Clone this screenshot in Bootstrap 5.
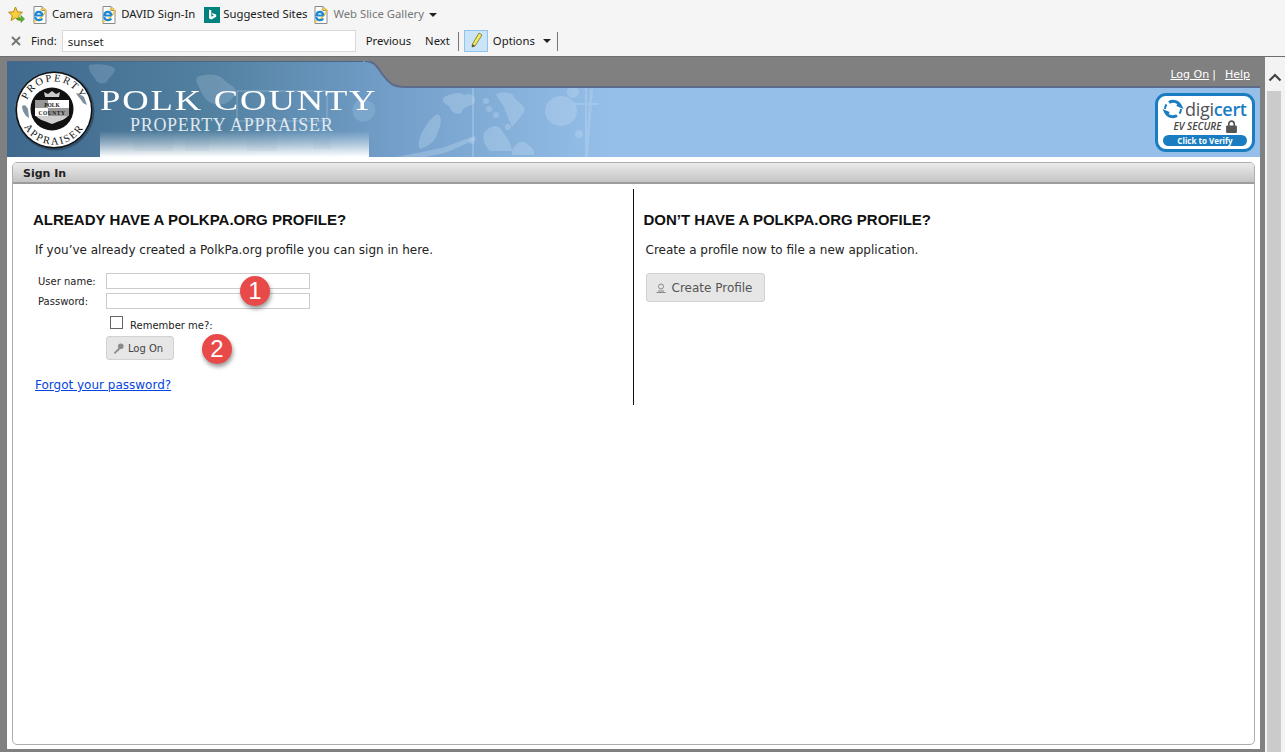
<!DOCTYPE html>
<html lang="en">
<head>
  <meta charset="UTF-8">
  <title>Sign In - Polk County Property Appraiser</title>
  <link rel="stylesheet" href="https://cdn.jsdelivr.net/npm/bootstrap@5.3.0/dist/css/bootstrap.min.css">
  <style>
    html, body { height: 100%; overflow: hidden; }
    body { background: #fff; font-family: "DejaVu Sans", sans-serif; color: #222; }
    .shell { height: 752px; width: 1285px; }

    /* browser toolbars */
    .chrome { height: 57px; background: #f5f5f5; border-bottom: 1px solid #6e6e6e; font-family: "Noto Sans", sans-serif; font-size: 11.3px; color: #1a1a1a; padding-left: 8px; }
    .fav-row { height: 27px; padding-top: 2px; }
    .find-row { height: 28px; }
    .fav-item { margin-right: 9px; gap: 3px; }
    .fav-tight { margin-right: 7px; }
    .fav-off { color: #777; }
    .caret-dn { width: 0; height: 0; border-left: 4px solid transparent; border-right: 4px solid transparent; border-top: 4px solid #222; }
    .caret-near { margin-left: 2px; }
    .find-close { width: 19px; padding-left: 3px; }
    .find-input { width: 294px; height: 22px; margin: 0 10px 0 5px; padding: 0 5px; font-size: 11.5px; font-family: inherit; border: 1px solid #d9d9d9; border-radius: 0; background: #fff; color: #222; }
    .find-next { margin-left: 14px; }
    .find-sep { width: 1px; height: 19px; background: #777; }
    .mark-btn { width: 24px; height: 22px; background: #cce4f7; border: 1px solid #8fc4ee; margin: 0 5px; }
    .opt-caret { margin: 0 6px 0 8px; }

    /* page */
    .viewport { height: 695px; background: #808080; }
    .page { width: 1253px; margin: 4px 0 3px 7px; background: #fff; }
    .scroll-bar { width: 20px; margin-left: 5px; background: #f3f3f3; }
    .scroll-top { height: 34px; padding-top: 16px; }
    .scroll-track { width: 14px; margin-left: 2px; background: #cbcbcb; }
    .edge { width: 0; flex: 1; background: #fff; }

    /* banner */
    .banner { height: 96px; }
    .banner-art { left: 0; top: 0; }
    .banner-in { z-index: 1; }
    .seal { margin: 8px 0 0 6px; flex: none; }
    .title-box { font-family: "Liberation Serif", serif; margin-left: 5px; padding-top: 24px; color: #fff; white-space: nowrap; line-height: 1; }
    .title-main { font-size: 30px; letter-spacing: 1.5px; transform: scaleX(1.22); transform-origin: left center; }
    .title-sub { font-size: 18px; letter-spacing: .7px; margin-left: 30px; margin-top: 1px; color: #dfe8f0; }
    .top-links { right: 10px; top: 6px; z-index: 1; font-size: 11px; color: #fff; }
    .top-links a { color: #fff; }
    .top-links span { margin: 0 9px 0 3px; }
    .ev-badge { right: 5px; top: 32px; width: 100px; height: 59px; border: 3px solid #1a7dc1; border-radius: 11px; background: #fff; z-index: 1; overflow: hidden; }
    .ev-logo { font-family: "Open Sans", sans-serif; font-size: 18px; line-height: 22px; color: #4f5357; padding: 2px 0 0 4px; gap: 1px; letter-spacing: -.3px; }
    .ev-logo b { color: #1a7dc1; font-weight: 600; }
    .ev-sec { font-family: "Open Sans", sans-serif; font-style: italic; font-weight: 600; font-size: 10px; line-height: 13px; color: #444; gap: 4px; }
    .ev-pill { background: #1a7dc1; color: #fff; font-family: "Open Sans", sans-serif; font-weight: 700; font-size: 8px; line-height: 11px; height: 11px; border-radius: 6px; margin: 2px 5px 0; text-align: center; }

    /* sign in panel */
    .sign-panel { margin: 5px 5px 4px 5px; height: 583px; border: 1px solid #aeaeae; border-radius: 5px; background: #fff; --bs-card-border-color: #aeaeae; }
    .sign-head { height: 21px; padding: 0 0 0 10px; background: linear-gradient(#ebebeb, #c4c4c4); border-bottom: 2px solid #9c9c9c; border-radius: 4px 4px 0 0; font-size: 11px; font-weight: 700; line-height: 21px; color: #222; }
    .sign-body { padding: 5px 0 0 0; }
    .side-left { height: 216px; border-right: 1px solid #111; padding: 0 0 0 20px; }
    .side-right { padding: 0 0 0 10px; }
    .side-title { font-family: "Liberation Sans", sans-serif; font-weight: 700; font-size: 15px; line-height: 18px; margin: 22px 0 12px; color: #111; white-space: nowrap; }
    .side-text { font-size: 12px; line-height: 18px; margin: 0 0 12px 2px; color: #222; white-space: nowrap; }
    .sign-form { margin-left: 5px; font-size: 10px; color: #222; }
    .field-row { height: 20px; }
    .field-row label { width: 68px; }
    .field-box { width: 204px; height: 16px; border: 1px solid #ccc; border-radius: 0; padding: 0 3px; font-size: 11px; }
    .remember { margin: 2px 0 5px 72px; height: 18px; }
    .remember input { width: 13px; height: 13px; margin: 0 7px 0 0; border: 1px solid #666; border-radius: 0; appearance: none; background: #fff; }
    .remember span { position: relative; top: 3px; }
    .grey-btn { background: #e6e6e6; border: 1px solid #d2d2d2; border-radius: 3px; color: #444; gap: 4px; }
    .logon-btn { width: 68px; height: 24px; margin-left: 68px; padding: 0 4px 0 0; font-size: 10px; }
    .profile-btn { width: 119px; height: 29px; margin: 14px 0 0 2px; padding: 0 2px 0 0; font-size: 12px; color: #555; gap: 6px; }
    .forgot { display: inline-block; font-size: 12px; margin: 16px 0 0 2px; color: #0645e0; }
    .pin { width: 30px; height: 30px; border-radius: 50%; background: #e84a4a; color: #fff; font-family: "Liberation Sans", sans-serif; font-size: 24px; line-height: 30px; text-align: center; box-shadow: 1px 3px 4px rgba(0,0,0,.4); z-index: 2; }
    .pin-one { left: 233px; top: 215px; }
    .pin-two { left: 195px; top: 273px; }
  </style>
</head>
<body>
  <svg width="0" height="0" class="position-absolute">
    <symbol id="ie-page" viewBox="1.500 0 16 18" overflow="visible">
      <path d="M2.500.5h8l4 4v13h-12z" fill="#fff" stroke="#8a8a8a"/>
      <path d="M10.500.5v4h4" fill="#e8e8e8" stroke="#8a8a8a"/>
      <path d="M.8 14.500c-.6 2.500 3.500 1 6.500-1.200 4-3 7.500-7.500 6.500-9.800-1-1.200-3-.5-5 .5" fill="none" stroke="#f2c230" stroke-width="1.400"/>
      <path d="M11 9.500H3.800C4.200 5 10 4.500 11 9.500M3.800 11c.3 3.500 5.200 4.300 7 1.500" fill="none" stroke="#1b87d6" stroke-width="2.200"/>
    </symbol>
  </svg>

  <div class="shell d-flex flex-column">
    <!-- favorites + find bars -->
    <div class="chrome flex-shrink-0">
      <div class="fav-row d-flex align-items-center">
        <svg width="17" height="18" viewBox="0 0 17 18" class="me-2"><path d="M7.500 1l2 4.800 5 .5-3.800 3.300 1.200 5-4.400-2.700-4.400 2.700 1.200-5L.5 6.300l5-.5z" fill="#f6cf3f" stroke="#b88a1a"/><path d="M9 12h4v-2.500l3.500 3.500-3.500 3.500V14H9z" fill="#5cb531" stroke="#3b8a1e" stroke-width=".6"/></svg>
        <span class="fav-item d-flex align-items-center"><svg width="16" height="18"><use href="#ie-page"/></svg>Camera</span>
        <span class="fav-item d-flex align-items-center"><svg width="16" height="18"><use href="#ie-page"/></svg>DAVID Sign-In</span>
        <span class="fav-item fav-tight d-flex align-items-center"><svg width="16" height="16" viewBox="0 0 16 16"><rect width="16" height="16" fill="#00837c"/><path d="M5 2.500l2.300.8v6.500l2.700-1.300-1.300-.6-.8-2 4.300 1.500v2.300l-4.800 2.800L5 11.300z" fill="#fff"/></svg>Suggested Sites</span>
        <span class="fav-item d-flex align-items-center fav-off"><svg width="16" height="18"><use href="#ie-page"/></svg>Web Slice Gallery<i class="caret-dn caret-near"></i></span>
      </div>
      <div class="find-row d-flex align-items-center">
        <span class="find-close d-flex"><svg width="10" height="10" viewBox="0 0 10 10"><path d="M1 1l8 8m0-8l-8 8" stroke="#777" stroke-width="2"/></svg></span>
        <span class="ms-1">Find:</span>
        <input class="find-input" type="text" value="sunset" aria-label="Find">
        <span>Previous</span>
        <span class="find-next">Next</span>
        <i class="find-sep ms-2"></i>
        <span class="mark-btn d-flex align-items-center justify-content-center"><svg width="16" height="18" viewBox="0 0 16 18"><path d="M11 1l3 2-7 11-3 1 .5-3z" fill="#f5e663" stroke="#8a8a3a"/><path d="M4.500 12L4 15l3-1" fill="#444"/></svg></span>
        <span>Options</span>
        <i class="caret-dn opt-caret"></i>
        <i class="find-sep"></i>
      </div>
    </div>

    <div class="viewport d-flex flex-grow-1">
      <div class="page d-flex flex-column position-relative">
        <!-- banner -->
        <div class="banner position-relative flex-shrink-0">
          <svg class="banner-art position-absolute" width="1253" height="96" viewBox="0 0 1253 96">
            <defs>
              <linearGradient id="skyFill" x1="0" x2="1" y1="0" y2="0">
                <stop offset="0" stop-color="#3f688d"/>
                <stop offset=".16" stop-color="#52809f"/>
                <stop offset=".31" stop-color="#739fca"/>
                <stop offset=".48" stop-color="#95bfe8"/>
                <stop offset="1" stop-color="#95bfe8"/>
              </linearGradient>
              <linearGradient id="fadeFill" x1="0" x2="0" y1="0" y2="1">
                <stop offset="0" stop-color="#fff" stop-opacity="0"/>
                <stop offset=".45" stop-color="#fff" stop-opacity=".4"/>
                <stop offset="1" stop-color="#fff"/>
              </linearGradient>
              <filter id="softEdge"><feGaussianBlur stdDeviation=".7"/></filter>
            </defs>
            <rect width="1253" height="96" fill="url(#skyFill)"/>
            <!-- lakes -->
            <g fill="#c4dcf2" fill-opacity=".32" filter="url(#softEdge)">
              <path d="M82 4c8-2 24 0 26 4-1 7-7 8-8 13-5 3-11 1-12-4-4-4-7-9-6-13z" fill-opacity=".2"/>
              <path d="M190 16c8-3 20-4 26 2 5 6 13 6 13 14-4 7-8 11-17 12-9-1-14-5-18-13-2-6-6-10-4-15z" fill-opacity=".22"/>
              <path d="M230 30h90v30h-90z" fill="none" stroke="#c4dcf2" stroke-width="1" stroke-opacity=".4"/>
              <path d="M350 40c10-4 20 2 18 12-3 8-14 12-20 5-4-6-3-13 2-17z" fill-opacity=".18"/>
              <path d="M436 37c6-4 16-7 21-3 8-3 14 2 10 9-6 2-10 3-13 9-5 2-10-1-11-6-3-3-8-4-7-9z"/>
              <path d="M489 33c7-2 13-2 17 1 2 6 10 8 12 15-5 8-9 13-13 17-3-8-5-12-7-17-1-6-7-10-9-16z"/>
              <ellipse cx="554" cy="50" rx="16" ry="15"/>
              <ellipse cx="566" cy="31" rx="6" ry="6"/>
              <path d="M423 59c6-6 9-8 10-3 3 5-2 14-4 20-4 7-10 10-16 12-4-9 4-21 10-29z"/>
              <path d="M477 72c5-6 12-10 17-4 5 8 10 12 11 22h-22c-5-5-8-12-6-18z"/>
              <path d="M505 90c2-6 9-12 14-8 5 4 9 6 8 12h-22z"/>
              <circle cx="482" cy="48" r="3"/><circle cx="489" cy="54" r="3"/><circle cx="479" cy="40" r="3"/><circle cx="501" cy="66" r="3"/><circle cx="465" cy="80" r="3"/>
              <circle cx="572" cy="73" r="4"/>
              <path d="M390 96c15-3 35-7 45-9l32-12 3 3-32 14-20 4z"/>
              <path d="M465 26h2v70h-2zM578 26h2v70h-2zM567 42h24v2h-24zM583 28l3 0-5 68h-3z"/>
            </g>
            <rect x="93" y="70" width="269" height="26" fill="url(#fadeFill)"/>
            <g fill="#5f87a8" fill-opacity=".07" filter="url(#softEdge)">
              <rect x="126" y="72" width="40" height="18"/><rect x="178" y="74" width="24" height="16"/><rect x="240" y="72" width="30" height="18"/><rect x="306" y="74" width="18" height="14"/>
            </g>
            <!-- gray tab strip -->
            <path d="M355 0c12 0 14 6 20 14 7 9 11 12 21 12h857V0z" fill="#808080"/>
            <path d="M358 0c10 0 12 6 18 14 7 9 11 12 21 12h856" fill="none" stroke="#5c6a8b" stroke-width="2"/>
            <rect width="356" height="1" fill="#46668a"/>
          </svg>
          <div class="banner-in d-flex position-relative">
            <svg class="seal" width="82" height="82" viewBox="0 0 82 82">
              <defs>
                <path id="sealTop" d="M12.500 41a28.500 28.500 0 0 1 57 0"/>
                <path id="sealBot" d="M6.500 41a34.500 34.500 0 0 0 69 0"/>
              </defs>
              <circle cx="42" cy="42" r="39.500" fill="#2a4258" opacity=".7"/>
              <circle cx="41" cy="41" r="38.500" fill="#111"/>
              <circle cx="41" cy="41" r="37" fill="#fff"/>
              <text font-family="Liberation Serif, serif" font-size="10.500" fill="#111" letter-spacing="2"><textPath href="#sealTop" startOffset="50%" text-anchor="middle">PROPERTY</textPath></text>
              <text font-family="Liberation Serif, serif" font-size="10.500" fill="#111" letter-spacing="1.800"><textPath href="#sealBot" startOffset="50%" text-anchor="middle">APPRAISER</textPath></text>
              <circle cx="39" cy="40" r="21.500" fill="#111"/>
              <path d="M22 31h34v13c0 6-10 8-17 11-7-3-17-5-17-11z" fill="#cfcfcf"/>
              <rect x="22" y="31" width="13" height="8" fill="#999"/>
              <rect x="22" y="39" width="13" height="8" fill="#fff"/>
              <rect x="35" y="31" width="21" height="8" fill="#fff"/>
              <rect x="35" y="39" width="21" height="8" fill="#999"/>
              <text x="39" y="37.500" font-family="Liberation Serif, serif" font-size="5.500" font-weight="700" text-anchor="middle" fill="#111">POLK</text>
              <text x="39" y="45.500" font-family="Liberation Serif, serif" font-size="5.500" font-weight="700" text-anchor="middle" fill="#111" letter-spacing=".5">COUNTY</text>
              <path d="M32 28l-1-5 4 2 4-3 4 3 4-2-1 5z" fill="#ccc"/>
              <path d="M9 37c3-2 4 0 6 3l1 9-3-2c-2-3-4-6-4-10zM63 24c3 1 6 2 8 4l3 8-4-2c-2-4-5-6-7-10z" fill="#7e8e9c"/>
            </svg>
            <div class="title-box">
              <div class="title-main">POLK COUNTY</div>
              <div class="title-sub">PROPERTY APPRAISER</div>
            </div>
          </div>
          <div class="top-links position-absolute"><a href="#">Log On</a><span>|</span><a href="#">Help</a></div>
          <div class="ev-badge position-absolute">
            <div class="ev-logo d-flex align-items-center">
              <svg width="22" height="22" viewBox="0 0 22 22"><path d="M7 4.500A8 8 0 0 1 18.500 8L15 6.500M15 17.500A8 8 0 0 1 3.500 14L7 15.500" fill="none" stroke="#1a7dc1" stroke-width="3"/><path d="M3 11a8 8 0 0 1 1.500-4.700M19 11a8 8 0 0 1-1.500 4.700" fill="none" stroke="#1a7dc1" stroke-width="2"/></svg>
              <span>digi<b>cert</b></span>
            </div>
            <div class="ev-sec d-flex align-items-center justify-content-center">EV SECURE
              <svg width="11" height="13" viewBox="0 0 10 12"><path d="M2.500 6V3.500a2.500 2.500 0 0 1 5 0V6" fill="none" stroke="#555" stroke-width="1.500"/><rect y="5" width="10" height="7" rx="1" fill="#555"/></svg>
            </div>
            <div class="ev-pill">Click to Verify</div>
          </div>
        </div>

        <!-- sign in panel -->
        <div class="sign-panel card flex-shrink-0">
          <div class="sign-head">Sign In</div>
          <div class="sign-body row g-0">
            <div class="col-6 side-left">
              <h2 class="side-title">ALREADY HAVE A POLKPA.ORG PROFILE?</h2>
              <p class="side-text">If you’ve already created a PolkPa.org profile you can sign in here.</p>
              <form class="sign-form">
                <div class="field-row d-flex align-items-center"><label for="userName">User name:</label><input id="userName" class="field-box" type="text"></div>
                <div class="field-row d-flex align-items-center"><label for="userPass">Password:</label><input id="userPass" class="field-box" type="password"></div>
                <div class="remember d-flex align-items-center"><input id="rememberMe" type="checkbox"><span>Remember me?:</span></div>
                <button type="button" class="grey-btn btn logon-btn d-flex align-items-center justify-content-center">
                  <svg width="11" height="11" viewBox="0 0 11 11"><circle cx="7.800" cy="3.200" r="2.800" fill="#8a8a8a"/><path d="M6 4.500L1 9.500v1h2v-1h1V8.500h1L7 6z" fill="#8a8a8a"/></svg>Log On
                </button>
              </form>
              <a class="forgot" href="#">Forgot your password?</a>
            </div>
            <div class="col-6 side-right">
              <h2 class="side-title">DON’T HAVE A POLKPA.ORG PROFILE?</h2>
              <p class="side-text">Create a profile now to file a new application.</p>
              <button type="button" class="grey-btn btn profile-btn d-flex align-items-center justify-content-center">
                <svg width="10" height="10" viewBox="0 0 10 10"><circle cx="5" cy="3.500" r="2.500" fill="none" stroke="#888"/><path d="M.5 9.500h9M2 8h6" stroke="#888"/></svg>Create Profile
              </button>
            </div>
          </div>
        </div>
        <span class="pin pin-one position-absolute">1</span>
        <span class="pin pin-two position-absolute">2</span>
      </div>

      <div class="scroll-bar d-flex flex-column flex-shrink-0">
        <div class="scroll-top d-flex justify-content-center"><svg width="14" height="9" viewBox="0 0 14 9"><path d="M1.500 7.500L7 2l5.500 5.500" fill="none" stroke="#444" stroke-width="2.200"/></svg></div>
        <div class="scroll-track flex-grow-1"></div>
      </div>
      <div class="edge"></div>
    </div>
  </div>
</body>
</html>
